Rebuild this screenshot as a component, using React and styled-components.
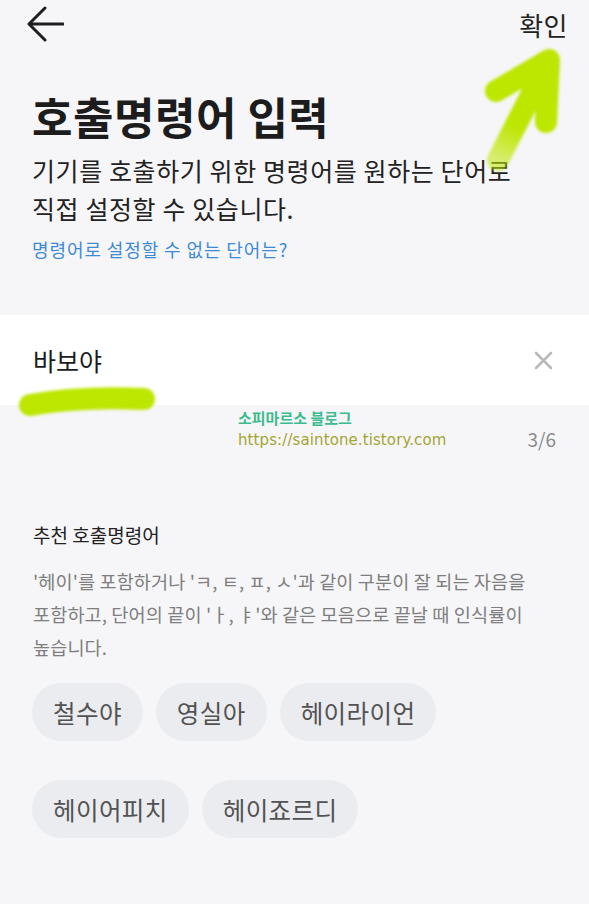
import React from 'react';
import styled, { createGlobalStyle } from 'styled-components';

const GlobalStyle = createGlobalStyle`
  html, body {
    margin: 0;
    padding: 0;
    background: #f6f6f8;
  }
  body {
    font-family: "Noto Sans CJK KR", "Noto Sans", sans-serif;
    color: #1e1e1e;
  }
`

const Page = styled.div`
  position: relative;
  min-height: 904px;
  background: #f6f6f8;
  overflow: hidden;
`

const Header = styled.div`
  height: 50px;
  display: flex;
  align-items: center;
  justify-content: space-between;
  padding: 0 21px 0 26px;
  .back {
    display: block;
    width: 38px;
    height: 38px;
    margin-top: -1px;
  }
  .confirm {
    font-size: 26px;
    color: #222;
    line-height: 1;
    letter-spacing: 0.5px;
  }
`

const Intro = styled.div`
  padding: 0 32px;
  .title {
    margin-top: 38px;
    font-size: 44px;
    font-weight: 700;
    line-height: 56px;
    color: #1c1c1c;
    letter-spacing: 0.5px;
  }
  .desc {
    margin-top: 7px;
    font-size: 25px;
    line-height: 38px;
    color: #222;
    letter-spacing: 0.6px;
  }
  .link {
    margin-top: 10px;
    font-size: 18px;
    line-height: 24px;
    color: #3d8ad6;
    letter-spacing: 0.9px;
  }
`

const InputBox = styled.div`
  margin-top: 54px;
  height: 90px;
  background: #fff;
  display: flex;
  align-items: center;
  justify-content: space-between;
  padding: 0 36px 0 33px;
  .value {
    font-size: 25px;
    color: #1c1c1c;
  }
  svg {
    display: block;
  }
`

const CounterRow = styled.div`
  display: flex;
  align-items: flex-end;
  justify-content: space-between;
  padding: 0 33px;
  .counter {
    font-size: 19px;
    line-height: 26px;
    color: #8a8a8a;
  }
`

const Watermark = styled.div`
  margin-left: 205px;
  font-family: "DejaVu Sans", "Noto Sans CJK KR", sans-serif;
  .blog {
    margin-top: 3px;
    font-size: 15px;
    font-weight: 700;
    line-height: 20px;
    color: #3cbb8c;
    font-family: "Noto Sans CJK KR", sans-serif;
  }
  .url {
    font-size: 15px;
    line-height: 24px;
    letter-spacing: 0.1px;
    color: #a3a532;
  }
`

const Recommend = styled.div`
  padding: 0 33px;
  margin-top: 71px;
  .heading {
    font-size: 19px;
    line-height: 24px;
    color: #222;
  }
  .help {
    margin-top: 17px;
    font-size: 18.6px;
    line-height: 33px;
    color: #7e7e7e;
    letter-spacing: 0.1px;
  }
`

const ChipList = styled.div`
  margin-top: 20px;
  display: flex;
  flex-wrap: wrap;
  column-gap: 13px;
  row-gap: 39px;
  margin-left: -1px;
`

const Chip = styled.div`
  height: 58px;
  padding: 0 21px;
  border-radius: 29px;
  background: #ebecf0;
  color: #525252;
  font-size: 24.5px;
  letter-spacing: 0.4px;
  display: flex;
  align-items: center;
`

const Marker = styled.svg`
  position: absolute;
  left: 0;
  top: 0;
  width: 589px;
  height: 904px;
  pointer-events: none;
`

const chips = ['철수야', '영실아', '헤이라이언', '헤이어피치', '헤이죠르디']

function BackArrow() {
  return (
    <svg className="back" viewBox="0 0 38 38" fill="none">
      <path d="M37 18 H4 M19 2 L3 18 L19 34" stroke="#1e1e1e" strokeWidth="3" strokeLinecap="round" strokeLinejoin="round" />
    </svg>
  )
}

function ClearIcon() {
  return (
    <svg width="19" height="19" viewBox="0 0 19 19">
      <path d="M2 2 L17 17 M17 2 L2 17" stroke="#b9b9b9" strokeWidth="2.6" strokeLinecap="round" />
    </svg>
  )
}

export default function App() {
  return (
    <Page>
      <GlobalStyle />
      <Header>
        <BackArrow />
        <span className="confirm">확인</span>
      </Header>
      <Intro>
        <div className="title">호출명령어 입력</div>
        <div className="desc">
          기기를 호출하기 위한 명령어를 원하는 단어로<br />
          직접 설정할 수 있습니다.
        </div>
        <div className="link">명령어로 설정할 수 없는 단어는?</div>
      </Intro>
      <InputBox>
        <span className="value">바보야</span>
        <ClearIcon />
      </InputBox>
      <CounterRow>
        <Watermark>
          <div className="blog">소피마르소 블로그</div>
          <div className="url">https://saintone.tistory.com</div>
        </Watermark>
        <span className="counter">3/6</span>
      </CounterRow>
      <Recommend>
        <div className="heading">추천 호출명령어</div>
        <div className="help">
          '헤이'를 포함하거나 'ㅋ, ㅌ, ㅍ, ㅅ'과 같이 구분이 잘 되는 자음을<br />
          포함하고, 단어의 끝이 'ㅏ, ㅑ'와 같은 모음으로 끝날 때 인식률이<br />
          높습니다.
        </div>
        <ChipList>
          {chips.map((c) => <Chip key={c}>{c}</Chip>)}
        </ChipList>
      </Recommend>
      <Marker viewBox="0 0 589 904">
        <defs>
          <filter id="soft" x="-10%" y="-10%" width="120%" height="120%">
            <feGaussianBlur stdDeviation="1.4" />
          </filter>
          <linearGradient id="fade" x1="498" y1="160" x2="548" y2="62" gradientUnits="userSpaceOnUse">
            <stop offset="0" stopColor="#bde600" stopOpacity="0.55" />
            <stop offset="0.35" stopColor="#bde600" stopOpacity="1" />
          </linearGradient>
        </defs>
        <g strokeLinecap="round" strokeLinejoin="round" fill="none" filter="url(#soft)">
          <path d="M498 160 L548 62" strokeWidth="22" stroke="url(#fade)" />
          <path d="M496 91 L549 60 L546 122" strokeWidth="22" stroke="#bde600" />
          <path d="M30 405 Q80 396 144 399" strokeWidth="22" stroke="#bde600" />
        </g>
      </Marker>
    </Page>
  )
}
